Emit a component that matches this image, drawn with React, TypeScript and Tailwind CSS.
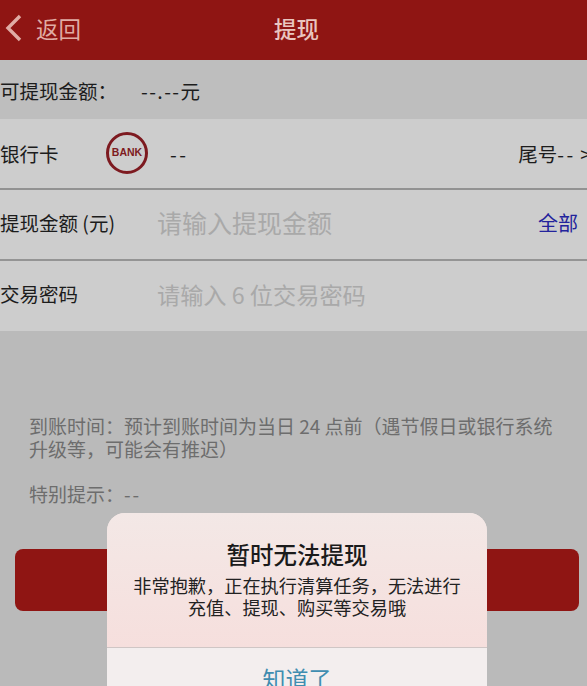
import React from 'react';

export default function App() {
  return (
    <div className="relative h-[686px] w-[587px] overflow-hidden bg-[#bababa] [font-family:'Noto_Sans_CJK_SC','Liberation_Sans',sans-serif]">
      <header className="flex h-[60px] items-center bg-[#8f1513] pb-[4px]">
        <div className="flex w-[120px] items-center pl-[3px] text-[#e0aca5]">
          <svg width="20" height="30" viewBox="0 0 20 30" fill="none">
            <path d="M17 3 L5 15 L17 27" stroke="currentColor" strokeWidth="3.4" />
          </svg>
          <span className="ml-[13px] text-[22.5px] leading-none">返回</span>
        </div>
        <h1 className="mr-[114px] flex-1 text-center text-[22.5px] font-medium leading-none text-[#e9c6c0]">提现</h1>
      </header>

      <div className="flex h-[59px] items-center bg-[#bebebe] pt-[2px] text-[19.5px] text-[#1c1c1c]">
        <span className="w-[141px]">可提现金额：</span>
        <span className="tracking-[1.4px]">--.--元</span>
      </div>

      <div className="flex h-[71px] items-center border-b-2 border-[#929292] bg-[#cdcdcd] text-[19.5px] text-[#1c1c1c]">
        <span className="w-[106px]">银行卡</span>
        <div className="mb-[2px] flex h-[42px] w-[42px] items-center justify-center rounded-full border-[3px] border-[#7d1a20]">
          <span className="text-[10.5px] font-bold text-[#7d1a20] [font-family:'Liberation_Sans',sans-serif]">BANK</span>
        </div>
        <span className="ml-[22px] tracking-[2.5px]">--</span>
        <span className="ml-auto mr-[-4px] shrink-0 whitespace-nowrap">
          尾号<span className="tracking-[2.5px]">--</span> &gt;
        </span>
      </div>

      <div className="flex h-[71px] items-center border-b-2 border-[#949494] bg-[#cdcdcd] pb-[4px] text-[19.5px] text-[#1c1c1c]">
        <span className="w-[157px]">提现金额 (元)</span>
        <span className="text-[25px] text-[#a9a9a9]">请输入提现金额</span>
        <span className="ml-auto mr-[9px] text-[20px] text-[#23239c]">全部</span>
      </div>

      <div className="flex h-[70px] items-center bg-[#cdcdcd] pb-[4px] text-[19.5px] text-[#1c1c1c]">
        <span className="w-[157px]">交易密码</span>
        <span className="text-[23.2px] text-[#a9a9a9]">请输入 6 位交易密码</span>
      </div>

      <div className="px-[29px] pt-[83px] text-[19px] leading-[23px] text-[#6d6d6d]">
        <p>到账时间：预计到账时间为当日 24 点前（遇节假日或银行系统升级等，可能会有推迟）</p>
        <p className="mt-[22px]">
          特别提示：<span className="tracking-[2px]">--</span>
        </p>
      </div>

      <button className="mx-[15px] mt-[44px] block h-[62px] w-[564px] rounded-lg bg-[#8f1513]" />

      <div className="absolute left-[107px] top-[513px] h-[190px] w-[380px] overflow-hidden rounded-[18px] bg-[#f3e4e2]">
        <div className="h-[135px] border-b border-[#cfc6c5] bg-gradient-to-b from-[#f3e8e6] to-[#f6dfdd] pt-[26px] text-center">
          <h2 className="text-[23.5px] font-medium leading-[30px] text-[#1a1a1a]">暂时无法提现</h2>
          <p className="mt-[5px] text-[18.2px] leading-[22px] text-[#222222]">
            非常抱歉，正在执行清算任务，无法进行
            <br />
            充值、提现、购买等交易哦
          </p>
        </div>
        <div className="bg-[#f3eeee] pt-[15px] text-center text-[23px] leading-[30px] text-[#3f8db0]">知道了</div>
      </div>
    </div>
  );
}
